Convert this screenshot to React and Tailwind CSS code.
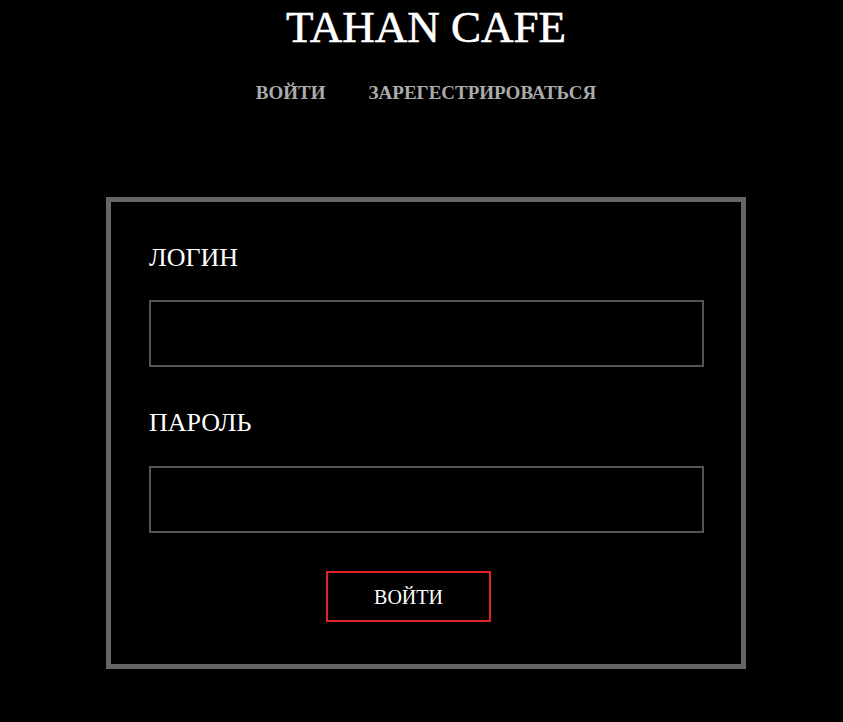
import React from "react";

const serif = { fontFamily: '"Liberation Serif", "Times New Roman", serif' };

export default function App() {
  return (
    <div
      className="min-h-[722px] w-full bg-black pl-[9px] text-white"
      style={serif}>
      {/* Шапка */}
      <header className="flex flex-col items-center">
        <h1 className="mt-[2px] text-[45px] leading-[50px] text-white [-webkit-text-stroke:0.6px_white]">
          TAHAN CAFE
        </h1>
        <nav className="mt-[30px] flex gap-[43px] text-[19px] font-bold leading-[22px] text-[#ababab]">
          <a href="#">ВОЙТИ</a>
          <a href="#">ЗАРЕГЕСТРИРОВАТЬСЯ</a>
        </nav>
      </header>

      {/* Форма входа */}
      <form className="mx-auto mt-[93px] w-[640px] border-[5px] border-[#666666] pl-[38px] pr-[37px] pt-[41px] pb-[42px]">
        <label className="block text-[26px] leading-[30px] text-white">
          ЛОГИН
        </label>
        <input
          type="text"
          className="mt-[27px] block h-[67px] w-full border-2 border-[#555555] bg-black px-3 text-white outline-none"
        />

        <label className="mt-[41px] block text-[26px] leading-[30px] text-white">
          ПАРОЛЬ
        </label>
        <input
          type="password"
          className="mt-[28px] block h-[67px] w-full border-2 border-[#555555] bg-black px-3 text-white outline-none"
        />

        <div className="mt-[38px] flex">
          <button
            type="button"
            className="ml-[177px] h-[51px] w-[165px] border-2 border-[#e0252a] bg-black text-[20px] text-white">
            ВОЙТИ
          </button>
        </div>
      </form>
    </div>
  );
}
